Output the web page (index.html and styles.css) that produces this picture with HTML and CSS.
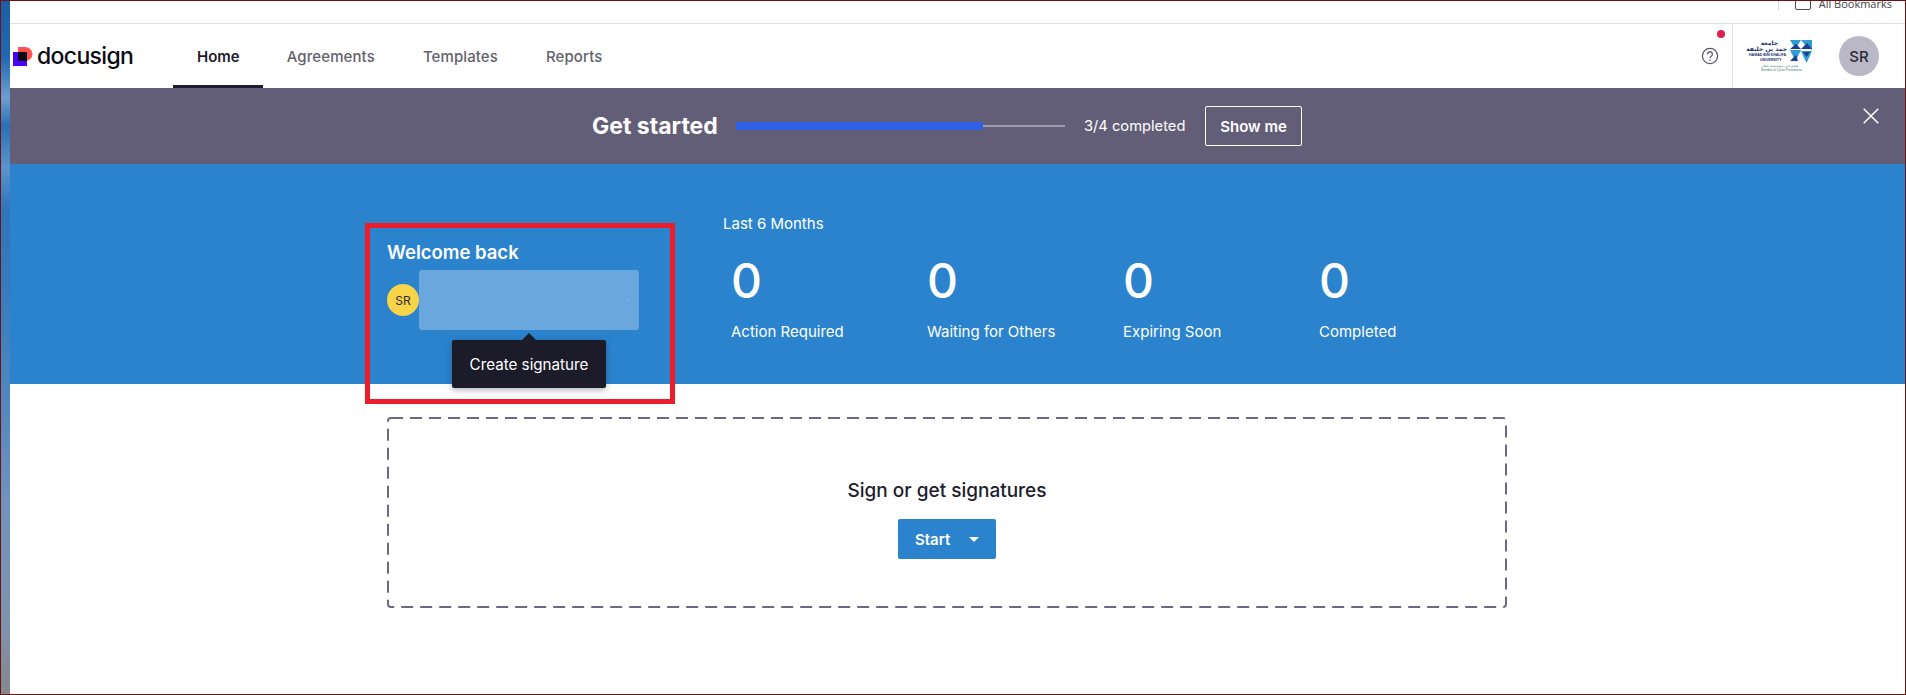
FILE: index.html
```html
<!DOCTYPE html>
<html lang="en">
<head>
<meta charset="utf-8">
<title>Docusign Home</title>
<link rel="stylesheet" href="styles.css">
</head>
<body>
<div class="window">
  <div class="wallpaper"></div>
  <div class="app">
    <div class="bookmarks">
      <div class="bookmarks-row">
        <span class="bookmarks-divider"></span>
        <span class="bookmarks-folder"></span>
        <span class="bookmarks-label">All Bookmarks</span>
      </div>
    </div>
    <header class="nav">
      <div class="brand">
        <svg class="brand-mark" width="20" height="19" viewBox="0 0 20 19">
          <path d="M5 0h7a7.5 7 0 0 1 0 14h-7z" fill="#ff5252"/>
          <rect x="0" y="5" width="14" height="14" fill="#4c00ff"/>
          <rect x="5" y="5" width="9" height="9" fill="#0b0b14"/>
        </svg>
        <span class="brand-name">docusign</span>
      </div>
      <nav class="tabs">
        <a class="tab tab-active">Home</a>
        <a class="tab">Agreements</a>
        <a class="tab">Templates</a>
        <a class="tab">Reports</a>
      </nav>
      <div class="nav-right">
        <div class="help">
          <svg width="18" height="18" viewBox="0 0 18 18" fill="none" stroke="#5a5a62" stroke-width="1.3">
            <circle cx="9" cy="9" r="7.6"/>
            <path d="M6.6 7.2a2.4 2.4 0 1 1 3.7 2c-.9.6-1.3 1-1.3 2"/>
            <path d="M9 12.6v1.2"/>
          </svg>
          <span class="help-dot"></span>
        </div>
        <div class="org">
          <svg class="org-logo" width="66" height="36" viewBox="0 0 66 36">
            <g text-anchor="end" fill="#1d2f6f">
              <text x="30" y="8" class="org-ar">جامعة</text>
              <text x="39" y="14" class="org-ar">حمد بن خليفة</text>
            </g>
            <text x="1" y="18.5" class="org-en">HAMAD BIN KHALIFA</text>
            <text x="12" y="23.5" class="org-en">UNIVERSITY</text>
            <text x="51" y="29.5" text-anchor="end" class="org-ar-small">عضو في مؤسسة قطر</text>
            <text x="13" y="34" class="org-en-small">Member of Qatar Foundation</text>
            <g fill="#2f9bd6">
              <polygon points="42,3 53,3 47.5,12"/>
              <polygon points="53,3 64,3 64,13 58,9"/>
              <polygon points="42,13 53,13 47.5,24"/>
              <polygon points="53,14 64,14 58.5,26"/>
            </g>
            <g fill="#1d3f8f">
              <polygon points="42,12 48,7 53,12"/>
              <polygon points="53,12 59,6 64,12"/>
              <polygon points="42,24 48,18 50,24"/>
              <polygon points="55,15 62,15 58.5,20"/>
            </g>
          </svg>
          <div class="avatar">SR</div>
        </div>
      </div>
    </header>
    <section class="banner">
      <h2 class="banner-title">Get started</h2>
      <div class="progress"><div class="progress-fill"></div></div>
      <span class="banner-count">3/4 completed</span>
      <button class="btn-outline">Show me</button>
      <svg class="banner-close" width="16" height="16" viewBox="0 0 16 16" stroke="#fff" stroke-width="1.5">
        <path d="M.7.7l14.6 14.6M15.3.7L.7 15.3"/>
      </svg>
    </section>
    <section class="hero">
      <div class="welcome">
        <h2 class="welcome-title">Welcome back</h2>
        <div class="signature-row">
          <div class="initials">SR</div>
          <div class="signature-box"><span class="signature-dot"></span></div>
          <div class="tooltip">Create signature</div>
        </div>
      </div>
      <div class="stats">
        <div class="stats-period">Last 6 Months</div>
        <div class="stats-grid">
          <div class="stat"><div class="stat-value">0</div><div class="stat-label">Action Required</div></div>
          <div class="stat"><div class="stat-value">0</div><div class="stat-label">Waiting for Others</div></div>
          <div class="stat"><div class="stat-value">0</div><div class="stat-label">Expiring Soon</div></div>
          <div class="stat"><div class="stat-value">0</div><div class="stat-label">Completed</div></div>
        </div>
      </div>
      <div class="annotation"></div>
    </section>
    <main class="content">
      <div class="dropzone">
        <svg class="dropzone-border" width="1120" height="191" viewBox="0 0 1120 191" fill="none">
          <rect x="1" y="1" width="1118" height="189" rx="3" stroke="#6c6a80" stroke-width="2" stroke-dasharray="12 7"/>
        </svg>
        <h3 class="dropzone-title">Sign or get signatures</h3>
        <button class="btn-start">Start<span class="caret"></span></button>
      </div>
    </main>
  </div>
</div>
</body>
</html>
```

FILE: styles.css
```css
* { box-sizing: border-box; }
html, body { margin: 0; padding: 0; }
body { font-family: "Inter", "Liberation Sans", sans-serif; background: #fff; color: #1e1d2b; overflow: hidden; }
h2, h3 { margin: 0; }

.window { display: flex; width: 1906px; height: 695px; border: 1px solid #6e1212; }
.wallpaper { width: 9px; flex: none; background: linear-gradient(180deg, #1b5ea6 0, #1f68b0 8%, #6d9fd0 14%, #2a70b6 18%, #5c95cd 24%, #2f75ba 30%, #3f80bf 48%, #6f93bd 72%, #7f93ac 90%, #84888f 100%); }
.app { flex: 1; min-width: 0; display: flex; flex-direction: column; background: #fff; }

.bookmarks { height: 23px; flex: none; border-bottom: 1px solid #e0e0e3; }
.bookmarks-row { height: 9px; display: flex; justify-content: flex-end; align-items: flex-end; overflow: hidden; padding-right: 13px; }
.bookmarks-divider { width: 1px; height: 9px; background: #ddd9e8; margin-right: 16px; }
.bookmarks-folder { width: 16px; height: 16px; border: 1.5px solid #4a4a4a; border-radius: 2px; margin-right: 8px; }
.bookmarks-label { font-family: "Open Sans", sans-serif; font-size: 11px; line-height: 13px; color: #444; height: 13px; }

.nav { height: 64px; flex: none; display: flex; align-items: stretch; }
.brand { width: 163px; flex: none; display: flex; align-items: center; padding-left: 3px; }
.brand-mark { flex: none; margin-top: 1px; }
.brand-name { margin-left: 4px; font-size: 23px; font-weight: 500; letter-spacing: -0.65px; color: #0b0b14; line-height: 28px; }
.tabs { display: flex; }
.tab { display: flex; align-items: center; padding: 0 24px; font-size: 15px; font-weight: 500; letter-spacing: 0.1px; color: #63626c; height: 64px; }
.tab-active { color: #1e1d2b; font-weight: 600; box-shadow: inset 0 -3px 0 #1e1d2b; letter-spacing: 0; padding-right: 23px; }
.nav-right { margin-left: auto; display: flex; align-items: stretch; }
.help { position: relative; display: flex; align-items: center; padding-right: 13px; }
.help-dot { position: absolute; top: 6px; right: 7px; width: 8px; height: 8px; border-radius: 50%; background: #dc1f50; }
.org { display: flex; align-items: center; border-left: 1px solid #dcdce0; padding-left: 15px; padding-right: 26px; }
.org-logo { flex: none; margin-right: 25px; margin-top: -2px; overflow: visible; }
.org-ar { font-family: "DejaVu Sans", sans-serif; font-size: 6px; font-weight: 700; }
.org-en { font-family: "Liberation Sans", sans-serif; font-size: 3.6px; font-weight: 700; fill: #1d2f6f; }
.org-ar-small { font-family: "DejaVu Sans", sans-serif; font-size: 4px; fill: #5f9f8a; }
.org-en-small { font-family: "Liberation Sans", sans-serif; font-size: 3.2px; fill: #4d7f78; }
.avatar { width: 40px; height: 40px; border-radius: 50%; background: #bab8c6; color: #2a2935; display: flex; align-items: center; justify-content: center; font-size: 15px; font-weight: 500; }

.banner { height: 76px; flex: none; display: flex; align-items: center; padding: 0 26px 0 582px; background: #635e78; color: #fff; }
.banner-title { font-size: 23px; font-weight: 700; width: 144px; white-space: nowrap; }
.progress { width: 329px; height: 2px; background: #9d9aab; display: flex; align-items: center; }
.progress-fill { width: 247px; height: 8px; flex: none; background: #2f5fe3; }
.banner-count { margin-left: 19px; width: 121px; font-size: 14.7px; white-space: nowrap; }
.btn-outline { width: 97px; height: 40px; background: transparent; border: 1px solid #fff; border-radius: 2px; color: #fff; font: 600 15px "Inter", sans-serif; padding: 0; }
.banner-close { margin-left: auto; margin-top: -20px; flex: none; }

.hero { position: relative; height: 220px; flex: none; display: flex; padding: 50px 0 0 377px; background: #2b83cd; color: #fff; }
.welcome { width: 336px; flex: none; padding-top: 26px; }
.welcome-title { font-size: 18.5px; line-height: 24px; font-weight: 600; }
.signature-row { position: relative; display: flex; align-items: center; margin-top: 6px; }
.initials { width: 32px; height: 32px; flex: none; border-radius: 50%; background: #f8d448; color: #2a2935; display: flex; align-items: center; justify-content: center; font-size: 12px; }
.signature-box { width: 220px; height: 60px; border-radius: 3px; background: #6aa7dc; display: flex; align-items: center; justify-content: flex-end; padding-right: 11px; }
.signature-dot { width: 1px; height: 1px; background: #b5d3ee; }
.tooltip { position: absolute; left: 65px; top: 70px; width: 154px; height: 48px; display: flex; align-items: center; justify-content: center; background: #1c1b29; color: #fff; border-radius: 2px; font-size: 15.2px; box-shadow: 0 2px 6px rgba(30, 30, 50, .35); }
.tooltip::before { content: ""; position: absolute; top: -7px; left: 70px; border-left: 7px solid transparent; border-right: 7px solid transparent; border-bottom: 7px solid #1c1b29; }
.stats-period { font-size: 15px; line-height: 20px; }
.stats-grid { display: flex; margin-top: 23px; padding-left: 8px; }
.stat { width: 196px; }
.stat-value { font-size: 48px; line-height: 48px; font-weight: 500; }
.stat-label { margin-top: 17px; font-size: 15px; line-height: 20px; white-space: nowrap; }
.annotation { position: absolute; left: 355px; top: 59px; width: 310px; height: 181px; border: 5px solid #ed1c2b; pointer-events: none; }

.content { flex: 1; padding: 33px 0 0 377px; }
.dropzone { position: relative; width: 1120px; height: 191px; display: flex; flex-direction: column; align-items: center; padding-top: 62px; }
.dropzone-border { position: absolute; inset: 0; }
.dropzone-title { font-size: 19px; line-height: 24px; font-weight: 500; color: #1e1d2b; }
.btn-start { margin-top: 16px; width: 98px; height: 40px; display: flex; align-items: center; padding: 0 0 0 17px; background: #2b83cd; border: 0; border-radius: 2px; color: #fff; font: 600 15px "Inter", sans-serif; }
.caret { margin-left: 19px; border-left: 5px solid transparent; border-right: 5px solid transparent; border-top: 5px solid #fff; }
```
